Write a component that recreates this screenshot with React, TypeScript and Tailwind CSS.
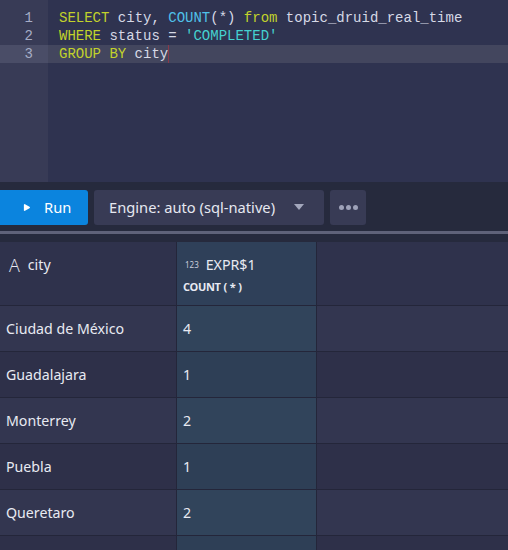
import { Play } from 'lucide-react'

const rows = [
  { city: 'Ciudad de México', n: 4 },
  { city: 'Guadalajara', n: 1 },
  { city: 'Monterrey', n: 2 },
  { city: 'Puebla', n: 1 },
  { city: 'Queretaro', n: 2 },
  { city: '', n: null },
]

const kw = 'text-[#c2d22b]'
const fn = 'text-[#4fc1e9]'
const str = 'text-[#45d1cf]'
const id = 'text-[#d6d9e6]'

export default function App() {
  return (
    <div className="w-[508px] h-[550px] overflow-hidden bg-[#262a3d] font-['Noto_Sans',sans-serif]">
      {/* editor */}
      <div className="h-[182px] flex bg-[#2f3350] font-['Liberation_Mono',monospace] text-[14px] leading-[18px]">
        <div className="w-[48px] bg-[#383b56] pt-[9px] text-[#a6adc6] text-right">
          <div className="pr-[15px]">1</div>
          <div className="pr-[15px]">2</div>
          <div className="pr-[15px] bg-[#4a4d67]">3</div>
        </div>
        <div className="flex-1 pt-[9px] whitespace-pre">
          <div className="pl-[11px]">
            <span className={kw}>SELECT</span>
            <span className={id}> city, </span>
            <span className={fn}>COUNT</span>
            <span className={id}>(*) </span>
            <span className={kw}>from</span>
            <span className={id}> topic_druid_real_time</span>
          </div>
          <div className="pl-[11px]">
            <span className={kw}>WHERE</span>
            <span className={id}> status = </span>
            <span className={str}>'COMPLETED'</span>
          </div>
          <div className="pl-[11px] bg-[#43465e] flex">
            <span className={kw}>GROUP BY</span>
            <span className={id}> city</span>
            <span className="w-px h-[18px] bg-[#8a3a4a]" />
          </div>
        </div>
      </div>

      {/* toolbar */}
      <div className="h-[49px] flex items-center gap-[6px] pt-[1px] text-[14.7px]">
        <button className="w-[88px] h-[35px] rounded-r-[3px] bg-[#0b84de] flex items-center text-white">
          <Play className="w-[9px] h-[9px] ml-[22px] mr-[13px] fill-white" strokeWidth={0} />
          Run
        </button>
        <button className="w-[230px] h-[35px] rounded-[3px] bg-[#383b55] flex items-center text-[#e6e8f0] pl-[15px]">
          Engine: auto (sql-native)
          <svg className="ml-[19px]" width="10" height="6" viewBox="0 0 10 6">
            <path d="M0 0h10L5 6z" fill="#a3a7bc" />
          </svg>
        </button>
        <button className="w-[36px] h-[35px] rounded-[3px] bg-[#383b55] flex items-center justify-center gap-[2px]">
          <span className="w-[5px] h-[5px] rounded-full bg-[#9ea2b8]" />
          <span className="w-[5px] h-[5px] rounded-full bg-[#9ea2b8]" />
          <span className="w-[5px] h-[5px] rounded-full bg-[#9ea2b8]" />
        </button>
      </div>
      <div className="h-[3px] bg-[#5f6279]" />
      <div className="h-[8px]" />

      {/* table */}
      <div className="text-[14.2px] text-[#e8eaf2]">
        <div className="h-[64px] flex border-b border-[#24263a]">
          <div className="w-[177px] bg-[#2f324c] border-r border-[#24263a] pl-[9px] pt-[13px] flex items-start">
            <span className="text-[18px] leading-[20px] mr-[8px] font-light font-['Open_Sans',sans-serif]">A</span>
            <span className="leading-[20px]">city</span>
          </div>
          <div className="w-[140px] bg-[#2f4059] border-r border-[#24263a] pl-[6px] pt-[13px]">
            <div className="flex items-center leading-[20px]">
              <span className="text-[8px] text-[#c9cdda] ml-[2px] mr-[7px]">123</span>
              <span>EXPR$1</span>
            </div>
            <div className="flex items-center text-[11px] font-bold tracking-[-0.4px] mt-[4px] font-['Open_Sans',sans-serif]">
              <span>COUNT</span>
              <span className="ml-[3px]">(</span>
              <span className="ml-[3px]">*</span>
              <span className="ml-[3px]">)</span>
            </div>
          </div>
          <div className="flex-1 bg-[#2f324c]" />
        </div>
        {rows.map((r, i) => (
          <div key={i} className="h-[46px] flex border-b border-[#24263a]">
            <div className={`w-[177px] border-r border-[#24263a] pl-[6px] flex items-center ${i % 2 === 0 ? 'bg-[#333650]' : 'bg-[#2e3049]'}`}>
              {r.city}
            </div>
            <div className={`w-[140px] border-r border-[#24263a] pl-[6px] flex items-center ${i % 2 === 0 ? 'bg-[#31445b]' : 'bg-[#2e3f56]'}`}>
              {r.n}
            </div>
            <div className={`flex-1 ${i % 2 === 0 ? 'bg-[#333650]' : 'bg-[#2e3049]'}`} />
          </div>
        ))}
      </div>
    </div>
  )
}
